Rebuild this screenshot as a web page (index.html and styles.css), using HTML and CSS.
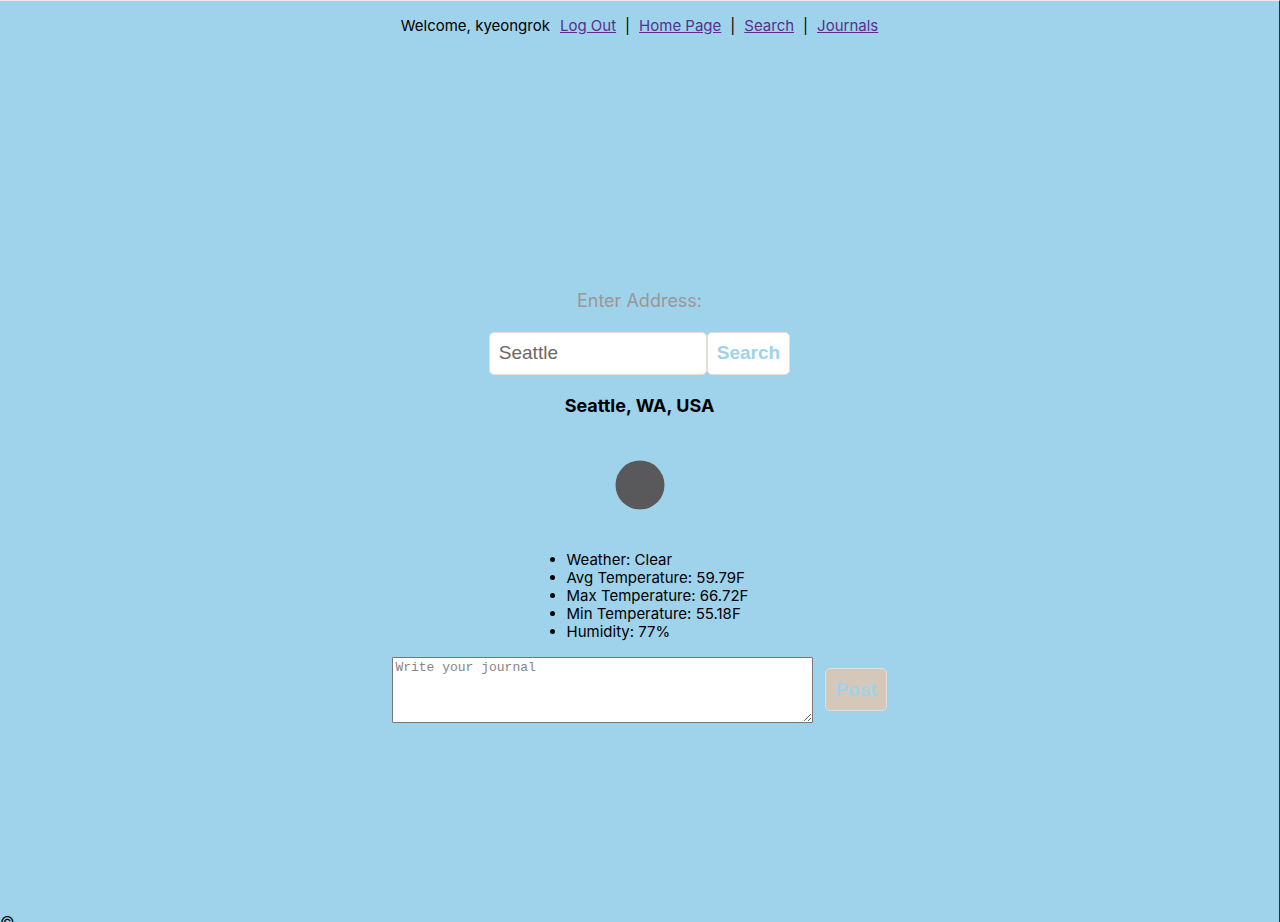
FILE: index.html
```html
<!DOCTYPE html>
<html lang="en">
<head>
<meta charset="utf-8">
<title>Weather Journal</title>
<link rel="stylesheet" href="styles.css">
</head>
<body>
<div class="page">
  <nav class="nav">
    <span class="welcome">Welcome, kyeongrok</span>
    <a href="#logout">Log Out</a>
    <span class="divider">|</span>
    <a href="#home">Home Page</a>
    <span class="divider">|</span>
    <a href="#search">Search</a>
    <span class="divider">|</span>
    <a href="#journals">Journals</a>
  </nav>
  <main class="main">
    <form class="search">
      <label class="search-label" for="address">Enter Address:</label>
      <div class="search-row">
        <input class="search-input" id="address" type="text" value="Seattle">
        <button class="button" type="button">Search</button>
      </div>
    </form>
    <h1 class="place">Seattle, WA, USA</h1>
    <svg class="weather-icon" viewBox="0 0 100 100" aria-hidden="true"><circle cx="50" cy="50" r="24.5" fill="#59595b"/></svg>
    <ul class="weather">
      <li>Weather: Clear</li>
      <li>Avg Temperature: 59.79F</li>
      <li>Max Temperature: 66.72F</li>
      <li>Min Temperature: 55.18F</li>
      <li>Humidity: 77%</li>
    </ul>
    <form class="journal">
      <textarea class="journal-text" aria-label="Journal" placeholder="Write your journal"></textarea>
      <button class="button button-post" type="button">Post</button>
    </form>
  </main>
  <footer class="footer">©</footer>
</div>
</body>
</html>
```
FILE: styles.css
```css
* {
  box-sizing: border-box;
}

body {
  margin: 0;
  height: 100vh;
  overflow: hidden;
  background: #9fd3eb;
  color: #000;
  font-family: Inter, "Liberation Sans", sans-serif;
  font-size: 15px;
  line-height: 18px;
}

.page {
  min-height: 100vh;
  border-top: 1px solid #ebebeb;
  border-right: 1px solid #24323a;
}

.nav {
  display: flex;
  justify-content: center;
  padding: 16px 0;
}

.nav a {
  color: #5c2d91;
}

.welcome {
  margin-right: 10px;
}

.divider {
  margin: 0 9px;
}

.main {
  display: flex;
  flex-direction: column;
  align-items: center;
  justify-content: center;
  height: calc(100vh - 60px);
  padding-top: 48px;
}

.search {
  display: flex;
  flex-direction: column;
  align-items: center;
  gap: 20px;
}

.search-label {
  color: #9c9694;
  font-size: 18px;
  line-height: 22px;
}

.search-row {
  display: flex;
}

.search-input,
.button {
  height: 43px;
  padding: 0 9px;
  border: 1px solid #e5dfda;
  border-radius: 5px;
  background: #fff;
  font-family: "Liberation Sans", Arial, sans-serif;
  font-size: 19px;
}

.search-input {
  width: 218px;
  color: #6f6763;
}

.button {
  color: #9fd3eb;
  font-weight: 700;
}

.place {
  margin: 20px 0 18px;
  font-size: 18px;
  font-weight: 700;
  line-height: 22px;
}

.weather-icon {
  width: 100px;
  height: 100px;
}

.weather {
  margin: 16px 4px 16px 0;
  padding-left: 40px;
}

.journal {
  display: flex;
  align-items: center;
  gap: 12px;
}

.journal-text {
  width: 421px;
  height: 66px;
  padding: 2px;
  border: 1px solid #767676;
  border-radius: 1px;
  font-family: "Liberation Mono", "Courier New", monospace;
  font-size: 13px;
  resize: both;
}

.journal-text::placeholder {
  color: #858585;
}

.button-post {
  background: #d5c8ba;
}

.footer {
  font-size: 16px;
}
```
